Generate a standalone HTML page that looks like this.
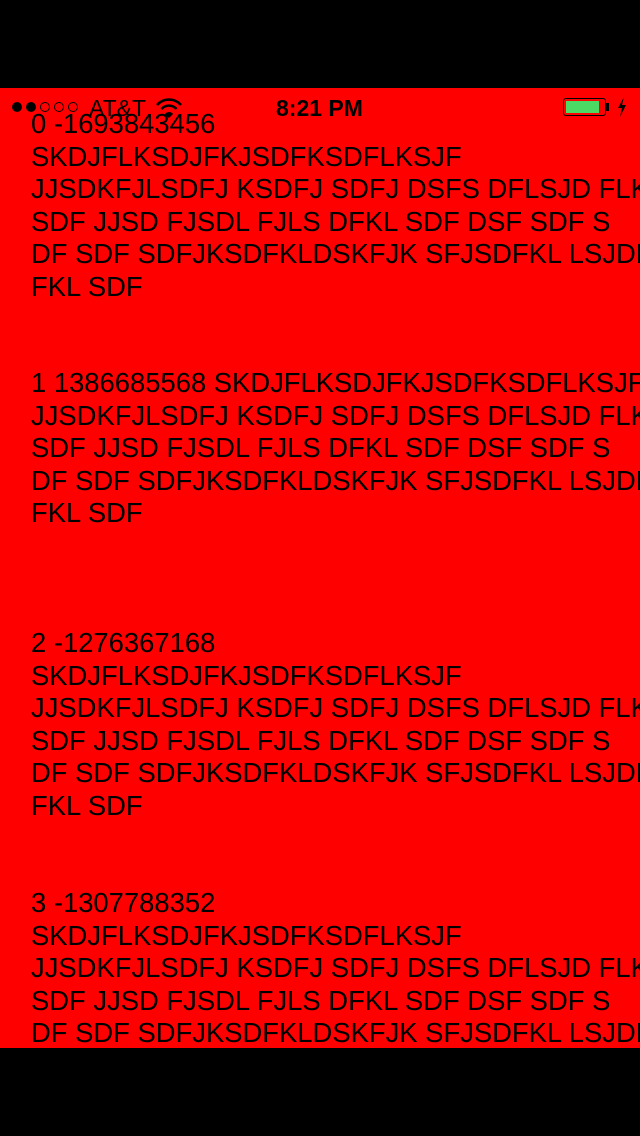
<!DOCTYPE html>
<html><head><meta charset="utf-8"><style>
html,body{margin:0;padding:0;background:#000;width:640px;height:1136px;overflow:hidden}
#s{position:absolute;left:0;top:88px;width:640px;height:960px;background:#f00;overflow:hidden}
.b{position:absolute;left:31px;font-family:"Liberation Sans",Arial,sans-serif;font-size:27.4px;line-height:32.5px;color:#000;white-space:nowrap}
.sb{position:absolute;font-family:"Liberation Sans",Arial,sans-serif;color:#000}
</style></head><body>
<div id="s">
<div class="b" style="top:20px">0 -1693843456<br>SKDJFLKSDJFKJSDFKSDFLKSJF<br>JJSDKFJLSDFJ KSDFJ SDFJ DSFS DFLSJD FLKSJ<br>SDF JJSD FJSDL FJLS DFKL SDF DSF SDF S<br>DF SDF SDFJKSDFKLDSKFJK SFJSDFKL LSJDFKL<br>FKL SDF</div>
<div class="b" style="top:279px">1 1386685568 SKDJFLKSDJFKJSDFKSDFLKSJF<br>JJSDKFJLSDFJ KSDFJ SDFJ DSFS DFLSJD FLKSJ<br>SDF JJSD FJSDL FJLS DFKL SDF DSF SDF S<br>DF SDF SDFJKSDFKLDSKFJK SFJSDFKL LSJDFKL<br>FKL SDF</div>
<div class="b" style="top:539px">2 -1276367168<br>SKDJFLKSDJFKJSDFKSDFLKSJF<br>JJSDKFJLSDFJ KSDFJ SDFJ DSFS DFLSJD FLKSJ<br>SDF JJSD FJSDL FJLS DFKL SDF DSF SDF S<br>DF SDF SDFJKSDFKLDSKFJK SFJSDFKL LSJDFKL<br>FKL SDF</div>
<div class="b" style="top:799px">3 -1307788352<br>SKDJFLKSDJFKJSDFKSDFLKSJF<br>JJSDKFJLSDFJ KSDFJ SDFJ DSFS DFLSJD FLKSJ<br>SDF JJSD FJSDL FJLS DFKL SDF DSF SDF S<br>DF SDF SDFJKSDFKLDSKFJK SFJSDFKL LSJDFKL<br>FKL SDF</div>
<svg style="position:absolute;left:10px;top:12px" width="72" height="14">
<circle cx="7" cy="7" r="5" fill="#000"/><circle cx="21" cy="7" r="5" fill="#000"/>
<circle cx="35" cy="7" r="4.5" fill="none" stroke="#000" stroke-width="1"/>
<circle cx="49" cy="7" r="4.5" fill="none" stroke="#000" stroke-width="1"/>
<circle cx="63" cy="7" r="4.5" fill="none" stroke="#000" stroke-width="1"/>
</svg>
<div class="sb" style="left:89px;top:7px;font-size:23px">AT&amp;T</div>
<svg style="position:absolute;left:155px;top:9px" width="28" height="22" viewBox="0 0 28 22">
<path d="M2 8 A16 16 0 0 1 26 8" fill="none" stroke="#000" stroke-width="2.6"/>
<path d="M6.5 12 A10 10 0 0 1 21.5 12" fill="none" stroke="#000" stroke-width="2.6"/>
<path d="M10 17 L14 21 L18 17 A5 5 0 0 0 10 17Z" fill="#000"/>
</svg>
<div class="sb" style="left:276px;top:7px;font-size:23px;font-weight:bold">8:21 PM</div>
<div style="position:absolute;left:563px;top:10px;width:43px;height:18px;border:1.5px solid #000;border-radius:3px;box-sizing:border-box"></div>
<div style="position:absolute;left:566px;top:13px;width:33px;height:12px;background:#4cd964"></div>
<div style="position:absolute;left:606px;top:15px;width:3px;height:8px;background:#000"></div>
<svg style="position:absolute;left:616px;top:9px" width="12" height="20" viewBox="0 0 12 20"><path d="M8 0 L2 11 L6 11 L4 20 L10 8 L6 8 Z" fill="#000"/></svg>
</div>
</body></html>
